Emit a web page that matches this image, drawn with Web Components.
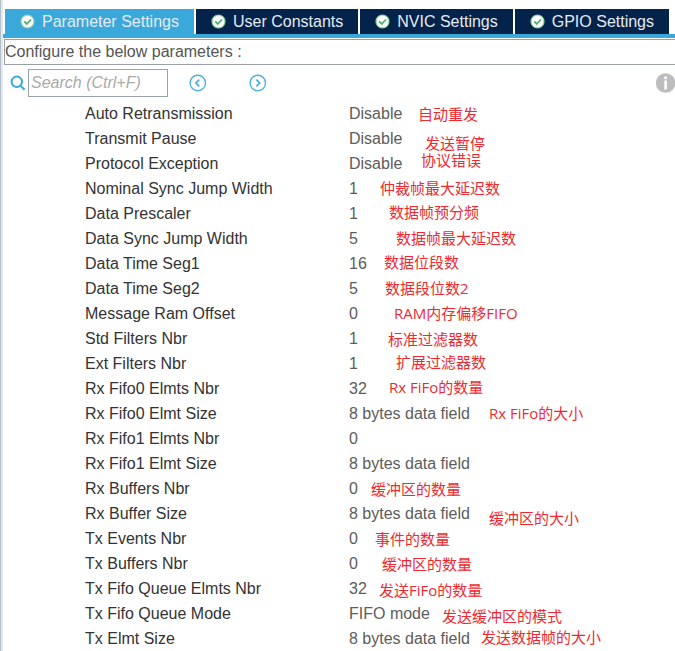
<!DOCTYPE html>
<html lang="en">
<head>
<meta charset="utf-8">
<title>Parameter Settings</title>
<style>
    body {
        margin: 0;
        background: #fff;
        font-family: "Liberation Sans", Arial, sans-serif;
        font-size: 16px;
        color: #333;
    }
</style>
</head>
<body>
<config-panel>
    <tab-bar slot="tabs">
        <config-tab active>Parameter Settings</config-tab>
        <config-tab>User Constants</config-tab>
        <config-tab>NVIC Settings</config-tab>
        <config-tab>GPIO Settings</config-tab>
    </tab-bar>
    <span slot="title">Configure the below parameters :</span>
    <search-bar slot="tools"></search-bar>
    <param-table></param-table>
    <note-layer slot="notes"></note-layer>
</config-panel>

<script>
const params = [
    ['Auto Retransmission', 'Disable'],
    ['Transmit Pause', 'Disable'],
    ['Protocol Exception', 'Disable'],
    ['Nominal Sync Jump Width', '1'],
    ['Data Prescaler', '1'],
    ['Data Sync Jump Width', '5'],
    ['Data Time Seg1', '16'],
    ['Data Time Seg2', '5'],
    ['Message Ram Offset', '0'],
    ['Std Filters Nbr', '1'],
    ['Ext Filters Nbr', '1'],
    ['Rx Fifo0 Elmts Nbr', '32'],
    ['Rx Fifo0 Elmt Size', '8 bytes data field'],
    ['Rx Fifo1 Elmts Nbr', '0'],
    ['Rx Fifo1 Elmt Size', '8 bytes data field'],
    ['Rx Buffers Nbr', '0'],
    ['Rx Buffer Size', '8 bytes data field'],
    ['Tx Events Nbr', '0'],
    ['Tx Buffers Nbr', '0'],
    ['Tx Fifo Queue Elmts Nbr', '32'],
    ['Tx Fifo Queue Mode', 'FIFO mode'],
    ['Tx Elmt Size', '8 bytes data field']
];

// hand placed remarks, x / y from the top left corner of the table
const notes = [
    [415, 5, '自动重发'],
    [422, 34, '发送暂停'],
    [418, 51, '协议错误'],
    [377, 79, '仲裁帧最大延迟数'],
    [386, 103, '数据帧预分频'],
    [393, 129, '数据帧最大延迟数'],
    [381, 153, '数据位段数'],
    [382, 179, '数据段位数2'],
    [391, 204, 'RAM内存偏移FIFO'],
    [385, 230, '标准过滤器数'],
    [393, 253, '扩展过滤器数'],
    [386, 278, 'Rx FiFo的数量'],
    [486, 304, 'Rx FiFo的大小'],
    [368, 380, '缓冲区的数量'],
    [486, 409, '缓冲区的大小'],
    [372, 430, '事件的数量'],
    [379, 455, '缓冲区的数量'],
    [376, 481, '发送FiFo的数量'],
    [439, 507, '发送缓冲区的模式'],
    [478, 528, '发送数据帧的大小']
];

let panelTemplate = document.createElement('template');
panelTemplate.innerHTML = `
<style>
    :host {
        display: block;
        box-sizing: border-box;
        min-height: 100vh;
        padding: 9px 0 0 2px;
        border-left: 1px solid #b4bfcc;
        background: linear-gradient(90deg, #e4e9ee 2px, #fff 2px);
    }
    .title {
        margin: 1px 0 0 1px;
        border: 1px solid #9aa0a6;
        border-right: 0;
        line-height: 24px;
        color: #555;
    }
    .sheet {
        position: relative;
    }
</style>
<slot name="tabs"></slot>
<div class="title"><slot name="title"></slot></div>
<slot name="tools"></slot>
<div class="sheet">
    <slot></slot>
    <slot name="notes"></slot>
</div>
`;

customElements.define('config-panel', class extends HTMLElement {
    constructor() {
        super();

        this.attachShadow({mode: 'open'}).appendChild(panelTemplate.content.cloneNode(true));
    }
});

let tabBarTemplate = document.createElement('template');
tabBarTemplate.innerHTML = `
<style>
    :host {
        display: flex;
        gap: 2px;
        padding: 0 6px 0 2px;
        border-bottom: 4px solid #3ba8dc;
    }
</style>
<slot></slot>
`;

customElements.define('tab-bar', class extends HTMLElement {
    constructor() {
        super();

        this.attachShadow({mode: 'open'}).appendChild(tabBarTemplate.content.cloneNode(true));
        this.setAttribute('role', 'tablist');
    }
});

let tabTemplate = document.createElement('template');
tabTemplate.innerHTML = `
<style>
    :host {
        display: block;
        flex: 1 1 auto;
    }
    button {
        display: flex;
        align-items: center;
        justify-content: center;
        gap: 7px;
        width: 100%;
        height: 25px;
        padding: 0 14px;
        border: 0;
        background: #03234b;
        color: #e6ebf2;
        font: inherit;
        white-space: nowrap;
        cursor: pointer;
    }
    :host([active]) button {
        background: #3ba8dc;
    }
    svg {
        flex: none;
    }
</style>
<button role="tab">
    <svg width="15" height="15" viewBox="0 0 15 15">
        <circle cx="7.5" cy="7.5" r="6.5" fill="#fff" stroke="#8fd49c" stroke-width="1.2"/>
        <path d="M4.2 7.3l2.6 2.6 4.2-4.4" fill="none" stroke="#4db36a" stroke-width="1.8"/>
    </svg>
    <span><slot></slot></span>
</button>
`;

customElements.define('config-tab', class extends HTMLElement {
    constructor() {
        super();

        this.attachShadow({mode: 'open'}).appendChild(tabTemplate.content.cloneNode(true));
    }

    connectedCallback() {
        this.shadowRoot.querySelector('button').addEventListener('click', () => {
            [...this.parentNode.children].forEach(t => t.removeAttribute('active'));
            this.setAttribute('active', '');
        });
    }
});

let searchTemplate = document.createElement('template');
searchTemplate.innerHTML = `
<style>
    :host {
        display: flex;
        align-items: center;
        padding: 4px 0 4px 7px;
    }
    svg {
        display: block;
    }
    input {
        box-sizing: border-box;
        width: 140px;
        height: 28px;
        margin: 0 21px 0 2px;
        padding: 0 2px;
        border: 1px solid #9aa3ab;
        font: inherit;
        color: #333;
    }
    input::placeholder {
        color: #aaa;
        font-style: italic;
    }
    button {
        padding: 0;
        border: 0;
        margin-right: 42px;
        background: none;
        cursor: pointer;
    }
    .info {
        margin: 0 0 0 auto;
    }
</style>
<label for="search" aria-label="Search">
    <svg width="16" height="16" viewBox="0 0 16 16" fill="none" stroke="#3ba8dc" stroke-width="2">
        <circle cx="6.8" cy="6.8" r="5.2"/>
        <path d="M10.4 10.6l4.2 4.2"/>
    </svg>
</label>
<input id="search" type="text" placeholder="Search (Ctrl+F)">
<button aria-label="Previous">
    <svg width="18" height="18" viewBox="0 0 18 18" fill="none" stroke="#4cb0e0" stroke-width="1.4">
        <circle cx="8.8" cy="9" r="7.7"/>
        <path d="M10.2 5.6L7 9l3.2 3.4" stroke-width="1.8"/>
    </svg>
</button>
<button aria-label="Next">
    <svg width="18" height="18" viewBox="0 0 18 18" fill="none" stroke="#4cb0e0" stroke-width="1.4">
        <circle cx="8.8" cy="9" r="7.7"/>
        <path d="M7.4 5.6l3.2 3.4-3.2 3.4" stroke-width="1.8"/>
    </svg>
</button>
<button class="info" aria-label="Information">
    <svg width="20" height="20" viewBox="0 0 20 20">
        <circle cx="10.6" cy="10" r="9.8" fill="#bdbdbd"/>
        <path d="M9.3 3.6h2.6v2.6H9.3zM9.3 7.6h2.6v9H9.3z" fill="#fff"/>
    </svg>
</button>
`;

customElements.define('search-bar', class extends HTMLElement {
    constructor() {
        super();

        this.attachShadow({mode: 'open'}).appendChild(searchTemplate.content.cloneNode(true));
    }
});

let tableTemplate = document.createElement('template');
tableTemplate.innerHTML = `
<style>
    :host {
        display: block;
    }
    table {
        width: 100%;
        table-layout: fixed;
        border-collapse: collapse;
    }
    col:first-child {
        width: 346px;
    }
    th, td {
        height: 25px;
        padding: 0;
        line-height: 25px;
        text-align: left;
        font-weight: normal;
        white-space: nowrap;
    }
    th {
        padding-left: 82px;
        color: #333;
    }
    td {
        color: #5c5c5c;
    }
</style>
<table>
    <colgroup><col><col></colgroup>
    <tbody></tbody>
</table>
`;

customElements.define('param-table', class extends HTMLElement {
    constructor() {
        super();

        this.attachShadow({mode: 'open'}).appendChild(tableTemplate.content.cloneNode(true));
    }

    connectedCallback() {
        this.shadowRoot.querySelector('tbody').innerHTML = params
            .map(([name, value]) => `<tr><th scope="row">${name}</th><td>${value}</td></tr>`)
            .join('');
    }
});

let notesTemplate = document.createElement('template');
notesTemplate.innerHTML = `
<style>
    :host {
        position: absolute;
        inset: 0;
        pointer-events: none;
        font-family: "Open Sans", "Noto Sans CJK SC", sans-serif;
        font-size: 15px;
        line-height: 16px;
        color: #ee2a30;
    }
    span {
        position: absolute;
        white-space: nowrap;
    }
</style>
`;

customElements.define('note-layer', class extends HTMLElement {
    constructor() {
        super();

        this.attachShadow({mode: 'open'}).appendChild(notesTemplate.content.cloneNode(true));
    }

    connectedCallback() {
        notes.forEach(([x, y, text]) => {
            const note = document.createElement('span');
            note.lang = 'zh-CN';
            note.textContent = text;
            note.style.left = `${x}px`;
            note.style.top = `${y}px`;
            this.shadowRoot.appendChild(note);
        });
    }
});
</script>
</body>
</html>
